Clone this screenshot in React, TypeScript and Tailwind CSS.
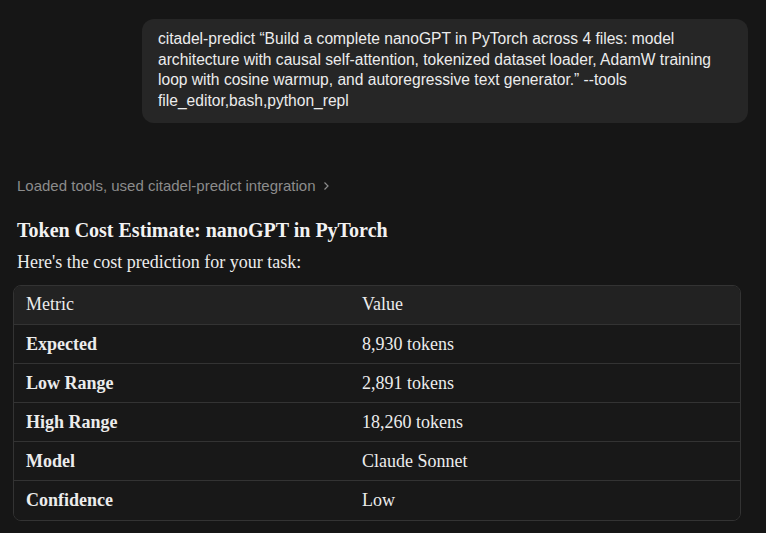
const rows: [string, string][] = [
  ['Expected', '8,930 tokens'],
  ['Low Range', '2,891 tokens'],
  ['High Range', '18,260 tokens'],
  ['Model', 'Claude Sonnet'],
  ['Confidence', 'Low'],
];

const serif = "font-['Liberation_Serif',serif]";

export default function App() {
  return (
    <div className="min-h-screen w-full bg-[#161616] text-[#ececec] overflow-hidden">
      {/* user message */}
      <div className="flex justify-end pt-[19px] pr-[18px]">
        <div className="w-[606px] rounded-xl bg-[#262626] pl-4 pr-[12px] pt-[10px] pb-[12px] font-['Liberation_Sans',sans-serif] text-[15.6px] leading-[20.5px] text-[#ececec]">
          citadel-predict “Build a complete nanoGPT in PyTorch across 4 files: model architecture with causal self-attention, tokenized dataset loader, AdamW training loop with cosine warmup, and autoregressive text generator.” --tools file_editor,bash,python_repl
        </div>
      </div>

      {/* assistant */}
      <div className="pl-[17px] pr-[25px]">
        <div className="mt-[52px] flex items-center gap-[5px] font-['Liberation_Sans',sans-serif] text-[15px] text-[#8c8c8c]">
          <span>Loaded tools, used citadel-predict integration</span>
          <svg width="10" height="10" viewBox="0 0 10 10" fill="none" stroke="currentColor" strokeWidth="1.2">
            <path d="M3.5 1.5 L7 5 L3.5 8.5" />
          </svg>
        </div>

        <h2 className={`${serif} mt-[20px] text-[20px] font-bold leading-[24px] text-[#f2f2f2]`}>
          Token Cost Estimate: nanoGPT in PyTorch
        </h2>
        <p className={`${serif} mt-[8px] text-[18px] leading-[24px] text-[#ececec]`}>
          Here's the cost prediction for your task:
        </p>

        <div className="-ml-[4px] mt-[11px] overflow-hidden rounded-lg border border-[#333333]">
          <table className={`${serif} w-full border-collapse text-[18px] text-[#ececec]`}>
            <thead>
              <tr className="bg-[#222222]">
                <th className="h-[39px] w-[348px] pl-[12px] text-left font-normal">Metric</th>
                <th className="h-[39px] text-left font-normal">Value</th>
              </tr>
            </thead>
            <tbody>
              {rows.map(([k, v]) => (
                <tr key={k} className="border-t border-[#333333] bg-[#181818]">
                  <td className="h-[39px] pl-[12px] font-bold">{k}</td>
                  <td className="h-[39px]">{v}</td>
                </tr>
              ))}
            </tbody>
          </table>
        </div>
      </div>
    </div>
  );
}
